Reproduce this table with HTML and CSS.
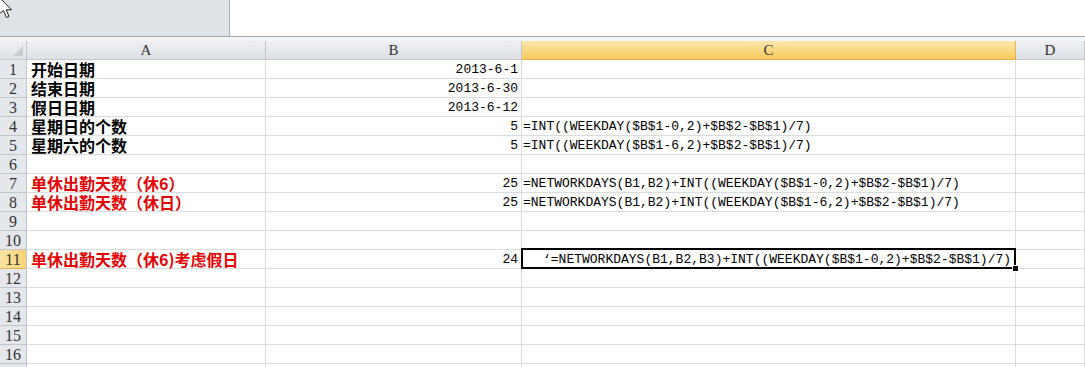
FILE: index.html
```html
<!DOCTYPE html>
<html lang="zh">
<head>
    <meta charset="UTF-8">
    <title>出勤天数计算</title>
    <link rel="stylesheet" href="styles.css">
</head>
<body>
    <!-- 鼠标指针 -->
    <svg class="pointer" width="16" height="22" viewBox="0 0 16 22">
        <path d="M-1 -3 L-1 14 L3.5 10.5 L6.5 17.5 L9 16.5 L6.2 9.8 L11.5 9.8 Z" fill="#fff" stroke="#222" stroke-width="1"/>
    </svg>

    <!-- 名称框 / 编辑栏 -->
    <div class="toolbar">
        <div class="name-box"></div>
    </div>
    <div class="toolbar-gap"></div>

    <div class="sheet">
        <div class="row head">
            <div class="corner"></div>
            <div class="col-head">A</div>
            <div class="col-head">B</div>
            <div class="col-head active">C</div>
            <div class="col-head">D</div>
        </div>
        <div class="row">
            <div class="row-head">1</div>
            <div class="cell label">开始日期</div>
            <div class="cell num">2013-6-1</div>
            <div class="cell"></div>
            <div class="cell"></div>
        </div>
        <div class="row">
            <div class="row-head">2</div>
            <div class="cell label">结束日期</div>
            <div class="cell num">2013-6-30</div>
            <div class="cell"></div>
            <div class="cell"></div>
        </div>
        <div class="row">
            <div class="row-head">3</div>
            <div class="cell label">假日日期</div>
            <div class="cell num">2013-6-12</div>
            <div class="cell"></div>
            <div class="cell"></div>
        </div>
        <div class="row">
            <div class="row-head">4</div>
            <div class="cell label">星期日的个数</div>
            <div class="cell num">5</div>
            <div class="cell formula">=INT((WEEKDAY($B$1-0,2)+$B$2-$B$1)/7)</div>
            <div class="cell"></div>
        </div>
        <div class="row">
            <div class="row-head">5</div>
            <div class="cell label">星期六的个数</div>
            <div class="cell num">5</div>
            <div class="cell formula">=INT((WEEKDAY($B$1-6,2)+$B$2-$B$1)/7)</div>
            <div class="cell"></div>
        </div>
        <div class="row">
            <div class="row-head">6</div>
            <div class="cell"></div>
            <div class="cell"></div>
            <div class="cell"></div>
            <div class="cell"></div>
        </div>
        <div class="row">
            <div class="row-head">7</div>
            <div class="cell label red">单休出勤天数（休6）</div>
            <div class="cell num">25</div>
            <div class="cell formula">=NETWORKDAYS(B1,B2)+INT((WEEKDAY($B$1-0,2)+$B$2-$B$1)/7)</div>
            <div class="cell"></div>
        </div>
        <div class="row">
            <div class="row-head">8</div>
            <div class="cell label red">单休出勤天数（休日）</div>
            <div class="cell num">25</div>
            <div class="cell formula">=NETWORKDAYS(B1,B2)+INT((WEEKDAY($B$1-6,2)+$B$2-$B$1)/7)</div>
            <div class="cell"></div>
        </div>
        <div class="row">
            <div class="row-head">9</div>
            <div class="cell"></div>
            <div class="cell"></div>
            <div class="cell"></div>
            <div class="cell"></div>
        </div>
        <div class="row">
            <div class="row-head">10</div>
            <div class="cell"></div>
            <div class="cell"></div>
            <div class="cell"></div>
            <div class="cell"></div>
        </div>
        <div class="row">
            <div class="row-head active">11</div>
            <div class="cell label red">单休出勤天数（休6)考虑假日</div>
            <div class="cell num">24</div>
            <div class="cell formula selected">‘=NETWORKDAYS(B1,B2,B3)+INT((WEEKDAY($B$1-0,2)+$B$2-$B$1)/7)</div>
            <div class="cell"></div>
        </div>
        <div class="row">
            <div class="row-head">12</div>
            <div class="cell"></div>
            <div class="cell"></div>
            <div class="cell"></div>
            <div class="cell"></div>
        </div>
        <div class="row">
            <div class="row-head">13</div>
            <div class="cell"></div>
            <div class="cell"></div>
            <div class="cell"></div>
            <div class="cell"></div>
        </div>
        <div class="row">
            <div class="row-head">14</div>
            <div class="cell"></div>
            <div class="cell"></div>
            <div class="cell"></div>
            <div class="cell"></div>
        </div>
        <div class="row">
            <div class="row-head">15</div>
            <div class="cell"></div>
            <div class="cell"></div>
            <div class="cell"></div>
            <div class="cell"></div>
        </div>
        <div class="row">
            <div class="row-head">16</div>
            <div class="cell"></div>
            <div class="cell"></div>
            <div class="cell"></div>
            <div class="cell"></div>
        </div>
        <div class="row">
            <div class="row-head">17</div>
            <div class="cell"></div>
            <div class="cell"></div>
            <div class="cell"></div>
            <div class="cell"></div>
        </div>
    </div>
</body>
</html>
```

FILE: styles.css
```css
body {
    margin: 0;
    background-color: #fff;
    font-family: "Liberation Mono", monospace;
    overflow: hidden;
}
.pointer {
    position: absolute;
    left: 0;
    top: 0;
}
.toolbar {
    height: 36px;
    border-bottom: 1px solid #a3a8ae;
    background-color: #fff;
}
.name-box {
    width: 229px;
    height: 36px;
    background-color: #dfe3e8;
    border-right: 1px solid #a9aeb4;
}
.toolbar-gap {
    height: 4px;
    background-color: #f3f4f6;
}
.row {
    display: grid;
    grid-template-columns: 27px 239px 256px 494px 1fr;
    height: 19px;
}
.row > div {
    box-sizing: border-box;
    height: 19px;
    border-right: 1px solid #dadcdd;
    border-bottom: 1px solid #dadcdd;
    white-space: nowrap;
    overflow: hidden;
}
.head > div {
    border-right: 1px solid #c3c7cc;
    border-bottom: 1px solid #c3c7cc;
    background: linear-gradient(#eef0f3, #dde1e6);
    color: #333;
    font-family: "Liberation Serif", serif;
    font-size: 15px;
    line-height: 19px;
    text-align: center;
}
.corner {
    position: relative;
}
.corner::after {
    content: "";
    position: absolute;
    right: 3px;
    bottom: 3px;
    border-left: 10px solid transparent;
    border-bottom: 10px solid #c7cbd0;
}
.head .col-head.active {
    background: linear-gradient(#fce7ad, #f7cc5e);
    border-right-color: #e2b54b;
    border-bottom-color: #e2b54b;
}
.row > .row-head {
    background-color: #e4e7ec;
    border-right: 1px solid #c3c7cc;
    border-bottom: 1px solid #c3c7cc;
    color: #333;
    font-family: "Liberation Serif", serif;
    font-size: 16px;
    line-height: 19px;
    text-align: center;
}
.row > .row-head.active {
    background: linear-gradient(90deg, #fbe3a3, #f8d277);
    border-bottom-color: #e2b54b;
}
.cell {
    font-size: 13px;
    line-height: 19px;
    color: #000;
}
.row > .label {
    padding-left: 4px;
    font-family: "Noto Sans CJK SC", sans-serif;
    font-weight: bold;
    font-size: 16px;
    line-height: 18px;
    overflow: visible;
}
.red {
    color: #e50000;
}
.num {
    text-align: right;
    padding-right: 3px;
}
.formula {
    padding-left: 1px;
}
.row > .selected {
    position: relative;
    overflow: visible;
    padding-left: 21px;
}
.selected::after {
    content: "";
    position: absolute;
    left: -1px;
    top: -2px;
    right: -1px;
    bottom: -1px;
    border: 2px solid #000;
}
.selected::before {
    content: "";
    position: absolute;
    right: -4px;
    bottom: -4px;
    width: 5px;
    height: 5px;
    background-color: #000;
    border: 1px solid #fff;
    z-index: 1;
}
```
